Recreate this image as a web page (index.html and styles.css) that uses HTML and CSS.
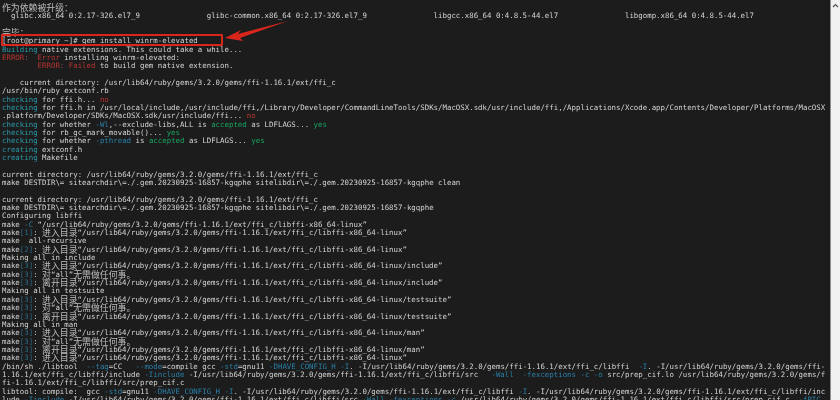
FILE: index.html
```html
<!DOCTYPE html>
<html lang="zh-CN">
<head>
<meta charset="utf-8">
<title>gem install winrm-elevated</title>
<link rel="stylesheet" href="styles.css">
</head>
<body>
<div class="window">
<main class="term">
<pre class="output"><span class="z">作为依赖被升级：</span>
  glibc.x86_64 0:2.17-326.el7_9               glibc-common.x86_64 0:2.17-326.el7_9               libgcc.x86_64 0:4.8.5-44.el7               libgomp.x86_64 0:4.8.5-44.el7

<span class="z">完毕：</span>
[root@primary ~]# gem install winrm-elevated
<span class="c">Building</span> native extensions. This could take a while...
<span class="r">ERROR</span><span class="d">:</span>  <span class="r">Error</span> installing winrm-elevated:
        <span class="r">ERROR</span><span class="d">:</span> <span class="r">Failed</span> to build gem native extension.

    current directory: /usr/lib64/ruby/gems/3.2.0/gems/ffi-1.16.1/ext/ffi_c
/usr/bin/ruby extconf.rb
<span class="c">checking</span> for ffi.h... <span class="r">no</span>
<span class="c">checking</span> for ffi.h in /usr/local/include,/usr/include/ffi,/Library/Developer/CommandLineTools/SDKs/MacOSX.sdk/usr/include/ffi,/Applications/Xcode.app/Contents/Developer/Platforms/MacOSX
.platform/Developer/SDKs/MacOSX.sdk/usr/include/ffi... <span class="r">no</span>
<span class="c">checking</span> for whether <span class="b">-Wl</span>,--exclude-libs,ALL is <span class="g">accepted</span> as LDFLAGS... <span class="g">yes</span>
<span class="c">checking</span> for rb_gc_mark_movable()... <span class="g">yes</span>
<span class="c">checking</span> for whether <span class="b">-pthread</span> is <span class="g">accepted</span> as LDFLAGS... <span class="g">yes</span>
<span class="c">creating</span> extconf.h
<span class="c">creating</span> Makefile

current directory: /usr/lib64/ruby/gems/3.2.0/gems/ffi-1.16.1/ext/ffi_c
make DESTDIR\= sitearchdir\=./.gem.20230925-16857-kgqphe sitelibdir\=./.gem.20230925-16857-kgqphe clean

current directory: /usr/lib64/ruby/gems/3.2.0/gems/ffi-1.16.1/ext/ffi_c
make DESTDIR\= sitearchdir\=./.gem.20230925-16857-kgqphe sitelibdir\=./.gem.20230925-16857-kgqphe
Configuring libffi
make <span class="b">-C</span> “/usr/lib64/ruby/gems/3.2.0/gems/ffi-1.16.1/ext/ffi_c/libffi-x86_64-linux”
make<span class="n">[1]</span>: <span class="z">进入目录</span>“/usr/lib64/ruby/gems/3.2.0/gems/ffi-1.16.1/ext/ffi_c/libffi-x86_64-linux”
make  all-recursive
make<span class="n">[2]</span>: <span class="z">进入目录</span>“/usr/lib64/ruby/gems/3.2.0/gems/ffi-1.16.1/ext/ffi_c/libffi-x86_64-linux”
Making all in include
make<span class="n">[3]</span>: <span class="z">进入目录</span>“/usr/lib64/ruby/gems/3.2.0/gems/ffi-1.16.1/ext/ffi_c/libffi-x86_64-linux/include”
make<span class="n">[3]</span>: <span class="z">对</span>“all”<span class="z">无需做任何事。</span>
make<span class="n">[3]</span>: <span class="z">离开目录</span>“/usr/lib64/ruby/gems/3.2.0/gems/ffi-1.16.1/ext/ffi_c/libffi-x86_64-linux/include”
Making all in testsuite
make<span class="n">[3]</span>: <span class="z">进入目录</span>“/usr/lib64/ruby/gems/3.2.0/gems/ffi-1.16.1/ext/ffi_c/libffi-x86_64-linux/testsuite”
make<span class="n">[3]</span>: <span class="z">对</span>“all”<span class="z">无需做任何事。</span>
make<span class="n">[3]</span>: <span class="z">离开目录</span>“/usr/lib64/ruby/gems/3.2.0/gems/ffi-1.16.1/ext/ffi_c/libffi-x86_64-linux/testsuite”
Making all in man
make<span class="n">[3]</span>: <span class="z">进入目录</span>“/usr/lib64/ruby/gems/3.2.0/gems/ffi-1.16.1/ext/ffi_c/libffi-x86_64-linux/man”
make<span class="n">[3]</span>: <span class="z">对</span>“all”<span class="z">无需做任何事。</span>
make<span class="n">[3]</span>: <span class="z">离开目录</span>“/usr/lib64/ruby/gems/3.2.0/gems/ffi-1.16.1/ext/ffi_c/libffi-x86_64-linux/man”
make<span class="n">[3]</span>: <span class="z">进入目录</span>“/usr/lib64/ruby/gems/3.2.0/gems/ffi-1.16.1/ext/ffi_c/libffi-x86_64-linux”
/bin/sh ./libtool  <span class="b">--tag</span>=CC   <span class="b">--mode</span>=compile gcc <span class="b">-std</span>=gnu11 <span class="b">-DHAVE_CONFIG_H</span> <span class="b">-I</span>. -I/usr/lib64/ruby/gems/3.2.0/gems/ffi-1.16.1/ext/ffi_c/libffi  <span class="b">-I</span>. -I/usr/lib64/ruby/gems/3.2.0/gems/ffi-
1.16.1/ext/ffi_c/libffi/include <span class="b">-Iinclude</span> -I/usr/lib64/ruby/gems/3.2.0/gems/ffi-1.16.1/ext/ffi_c/libffi/src   <span class="b">-Wall</span>  <span class="b">-fexceptions</span> <span class="b">-c</span> <span class="b">-o</span> src/prep_cif.lo /usr/lib64/ruby/gems/3.2.0/gems/f
fi-1.16.1/ext/ffi_c/libffi/src/prep_cif.c
libtool: compile:  gcc <span class="b">-std</span>=gnu11 <span class="b">-DHAVE_CONFIG_H</span> <span class="b">-I</span>. -I/usr/lib64/ruby/gems/3.2.0/gems/ffi-1.16.1/ext/ffi_c/libffi <span class="b">-I</span>. -I/usr/lib64/ruby/gems/3.2.0/gems/ffi-1.16.1/ext/ffi_c/libffi/inc
lude <span class="b">-Iinclude</span> -I/usr/lib64/ruby/gems/3.2.0/gems/ffi-1.16.1/ext/ffi_c/libffi/src <span class="b">-Wall</span> <span class="b">-fexceptions</span> <span class="b">-c</span> /usr/lib64/ruby/gems/3.2.0/gems/ffi-1.16.1/ext/ffi_c/libffi/src/prep_cif.c  <span class="b">-fPIC</span></pre>
<div class="cmd-box"></div>
<svg class="arrow" width="70" height="24" viewBox="0 0 70 24" aria-hidden="true"><polygon points="1,20 17,12 14,16 64,3 16,20 19,23"/></svg>
</main>
<aside class="scrollbar">
<svg class="up" width="7" height="5" viewBox="0 0 7 5" aria-hidden="true"><path d="M1 4 L3.5 1.5 L6 4"/></svg>
</aside>
</div>
</body>
</html>
```
FILE: styles.css
```css
html, body {
  margin: 0;
  height: 100%;
  overflow: hidden;
  background: #1c1c1c;
}
.window {
  display: flex;
  width: 840px;
  height: 400px;
  overflow: hidden;
}
.term {
  position: relative;
  flex: 1;
  min-width: 0;
  background: #1c1c1c;
  overflow: hidden;
}
.output {
  margin: 0;
  padding: 3.8px 0 0 2px;
  font-family: "DejaVu Sans Mono", "Noto Sans CJK SC", monospace;
  font-size: 7.4px;
  line-height: 8.35px;
  color: #d4d4d4;
  white-space: pre;
  filter: blur(0.35px);
}
.z {
  font-family: "Noto Sans CJK SC", sans-serif;
  font-size: 8.9px;
  line-height: 0;
  vertical-align: -1px;
  color: #bdbdbd;
}
.c { color: #2c98a8; }
.r { color: #b8352f; }
.d { color: #8a5a58; }
.g { color: #17a561; }
.b { color: #2a7fa6; }
.n { color: #2d6a86; }
.cmd-box {
  position: absolute;
  left: 1px;
  top: 34px;
  width: 218px;
  height: 8px;
  border: 2px solid #d9261c;
  border-radius: 1px;
}
.arrow {
  position: absolute;
  left: 224px;
  top: 18px;
}
.arrow polygon { fill: #d9261c; }
.scrollbar {
  flex: 0 0 10px;
  box-sizing: border-box;
  background: #f0f0f0;
  border-left: 1px solid #8f8f8f;
  display: flex;
  justify-content: center;
  padding-top: 3px;
}
.up { display: block; }
.up path { fill: none; stroke: #555; stroke-width: 1.2; }
```
